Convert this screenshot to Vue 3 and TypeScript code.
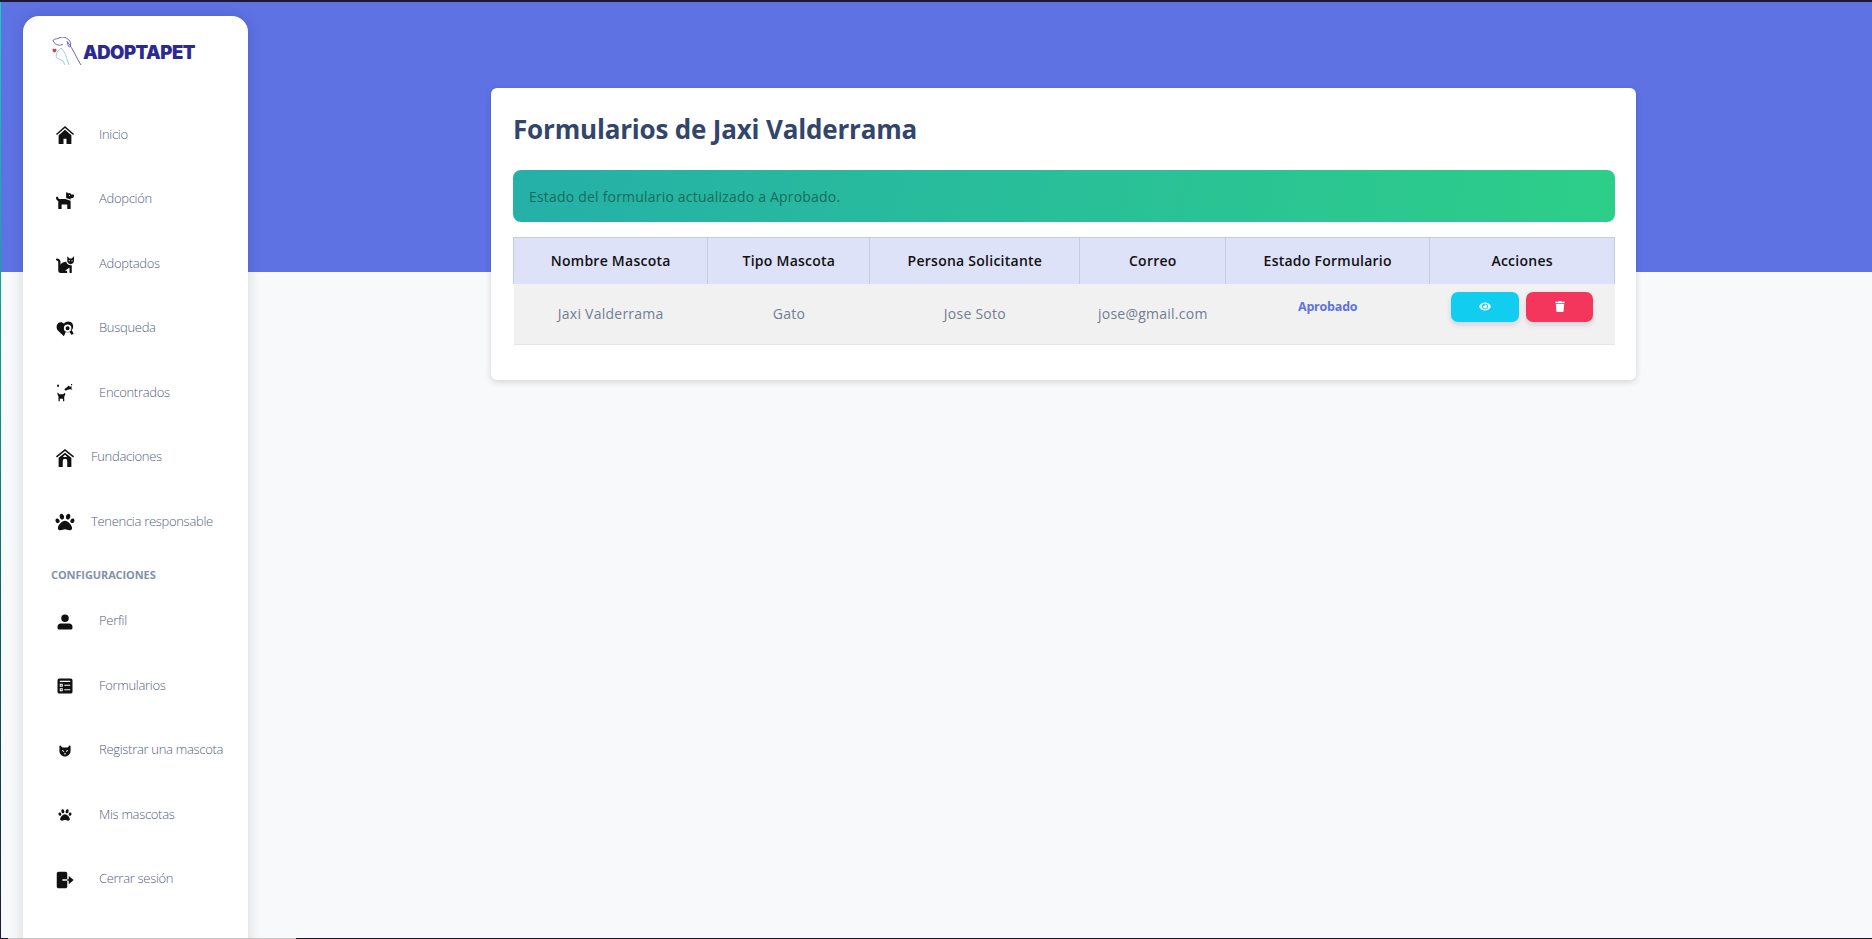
<script setup lang="ts">
interface NavItem {
  label: string
  icon: string
  wide?: boolean
}

interface Glyph {
  box: string
  d: string
}

const mainItems: NavItem[] = [
  { label: 'Inicio', icon: 'home' },
  { label: 'Adopción', icon: 'dog' },
  { label: 'Adoptados', icon: 'cat' },
  { label: 'Busqueda', icon: 'search' },
  { label: 'Encontrados', icon: 'found' },
  { label: 'Fundaciones', icon: 'kennel', wide: true },
  { label: 'Tenencia responsable', icon: 'paw', wide: true },
]

const configItems: NavItem[] = [
  { label: 'Perfil', icon: 'user' },
  { label: 'Formularios', icon: 'form' },
  { label: 'Registrar una mascota', icon: 'face' },
  { label: 'Mis mascotas', icon: 'smallpaw' },
  { label: 'Cerrar sesión', icon: 'logout' },
]

const pawPath = 'M256 224c-79.41 0-192 122.76-192 200.25 0 34.9 26.81 55.75 71.74 55.75 48.84 0 81.09-25.08 120.26-25.08 39.51 0 71.85 25.08 120.26 25.08 44.93 0 71.74-20.85 71.74-55.75C448 346.76 335.41 224 256 224zm-147.28-12.61c-10.4-34.65-42.44-57.09-71.56-50.13-29.12 6.96-44.29 40.69-33.89 75.34 10.4 34.65 42.44 57.09 71.56 50.13 29.12-6.96 44.29-40.69 33.89-75.34zm84.72-20.78c30.94-8.14 46.42-49.94 34.58-93.36s-46.52-72.01-77.46-63.87-46.42 49.94-34.58 93.36c11.84 43.42 46.52 72.01 77.46 63.87zm281.39-29.34c-29.12-6.96-61.15 15.48-71.56 50.13-10.4 34.65 4.77 68.38 33.89 75.34 29.12 6.96 61.15-15.48 71.56-50.13 10.4-34.65-4.77-68.38-33.89-75.34zm-156.27 29.34c30.94 8.14 65.62-20.45 77.46-63.87 11.84-43.42-3.64-85.21-34.58-93.36s-65.62 20.45-77.46 63.87c-11.84 43.42 3.64 85.22 34.58 93.36z'

const glyphs: Record<string, Glyph> = {
  home: {
    box: '0 0 24 24',
    d: 'M12 0 0 10.500l1.200 1.400L12 2.600l10.800 9.300 1.200-1.400zM12 5 3.500 12.300V24H10v-7h4v7h6.500V12.300z',
  },
  dog: {
    box: '0 0 512 512',
    d: 'M496 96h-64l-7.160-14.310A32 32 0 0 0 396.220 64H342.600l-27.280-27.280C305.230 26.640 288 33.780 288 48.030v149.840l128 45.710V208h32c35.350 0 64-28.650 64-64v-32c0-8.840-7.160-16-16-16zm-112 48c-8.840 0-16-7.160-16-16s7.160-16 16-16 16 7.160 16 16-7.160 16-16 16zM96 224c-17.640 0-32-14.360-32-32 0-17.670-14.330-32-32-32S0 174.330 0 192c0 41.660 26.830 76.850 64 90.100V496c0 8.840 7.160 16 16 16h64c8.840 0 16-7.160 16-16V384h160v112c0 8.840 7.160 16 16 16h64c8.840 0 16-7.160 16-16V277.550L266.050 224H96z',
  },
  cat: {
    box: '0 0 512 512',
    d: 'M290.590 192c-20.180 0-106.820 1.980-162.590 85.950V192c0-52.940-43.060-96-96-96-17.670 0-32 14.330-32 32s14.330 32 32 32c17.640 0 32 14.360 32 32v256c0 35.300 28.700 64 64 64h176c8.840 0 16-7.160 16-16v-16c0-17.670-14.330-32-32-32h-32l128-96v144c0 8.840 7.160 16 16 16h32c8.840 0 16-7.160 16-16V289.860c-10.290 2.670-20.890 4.540-32 4.540-61.810 0-113.520-44.050-125.410-102.400zM448 96h-64l-64-64v134.400c0 53.020 42.980 96 96 96s96-42.980 96-96V32l-64 64zm-72 80c-8.840 0-16-7.160-16-16s7.160-16 16-16 16 7.160 16 16-7.160 16-16 16zm80 0c-8.840 0-16-7.160-16-16s7.160-16 16-16 16 7.160 16 16-7.160 16-16 16z',
  },
  search: {
    box: '0 0 24 24',
    d: 'M10.500 21.500 2.500 14C-.5 10.500.5 3.500 6 3c2 0 3.500.7 4.500 2C12 3 14 2 16.500 2c4.500 0 7 4 6.300 7.500-.3 1.800-1 3-1.800 4l2.500 4.500-2.500 2-3-4c-1.500.6-3.500.6-5 0zM15.500 6a5 5 0 1 0 0 10 5 5 0 0 0 0-10zm0 2.300a2.700 2.700 0 1 1 0 5.400 2.700 2.700 0 0 1 0-5.400z',
  },
  found: {
    box: '0 0 24 24',
    d: 'M1.500 1h2.500v2.500H1.500zM11 7l3.500-2.800 2.500-2.200 1.500 1.500L21 3l-.5 2.500 1.500 2-3-.5-3.500.5-2.500 1.500zM20 0h1.500v1.500H20zM2 11l2.500 2.500h5l2.300-2 .7 2.500-1.500 2.500V23H9.300v-3.500H5V23H3.300v-6.500L2 14z',
  },
  kennel: {
    box: '0 0 24 24',
    d: 'M12 0 0 9.500l1.200 1.700L12 2.800l10.800 8.400L24 9.500zM12 5 3.500 11.500V24H9v-8a3 3 0 0 1 6 0v8h5.500V11.500zm0 2.800 3 2.700H9z',
  },
  paw: { box: '14 14 485 485', d: pawPath },
  user: {
    box: '0 0 24 24',
    d: 'M12 2a5 5 0 1 1 0 10 5 5 0 0 1 0-10zM6.500 14h11c2.800 0 4.500 2 4.500 4.500v1c0 1.500-1 2.500-2.500 2.500h-15C3 22 2 21 2 19.500v-1C2 16 3.700 14 6.500 14z',
  },
  form: {
    box: '0 0 24 24',
    d: 'M4.500 2h15A2.500 2.500 0 0 1 22 4.500v15a2.500 2.500 0 0 1-2.500 2.500h-15A2.500 2.500 0 0 1 2 19.500v-15A2.500 2.500 0 0 1 4.500 2zM5 5v1.500h14V5zm0 4v4h4V9zm1.300 1.300h1.400v1.400H6.300zM5 15v4h4v-4zm1.300 1.300h1.400v1.400H6.300zM11 10.200v1.600h8v-1.600zm0 6v1.600h8v-1.600z',
  },
  face: {
    box: '-5 -5 34 34',
    d: 'M3 1l4 4.500h10L21 1l1.500 1.500v10c0 5-5 10-10.500 10S1.500 17.500 1.500 12.500v-10zM7.500 10 6 11l3.500 3 1-1.500zm9 0-3 2.500 1 1.500 3.500-3zM12 15l-1.700 2.500L12 19l1.700-1.500z',
  },
  smallpaw: { box: '-98 -98 709 709', d: pawPath },
  logout: {
    box: '0 0 24 24',
    d: 'M3.500 1h9C14 1 15 2 15 3.500V11H8.500v2H15v7.500c0 1.500-1 2.500-2.500 2.500h-9C2 23 1 22 1 20.500v-17C1 2 2 1 3.500 1zM17 6.500l6.500 5.500-6.500 5.500V13h-2v-2h2z',
  },
}
</script>

<template>
  <div class="page">
    <div class="banner" />
    <div class="edge edge-top" />
    <div class="edge edge-left" />
    <div class="edge edge-bottom" />

    <aside class="sidebar">
      <div class="brand">
        <svg class="brand-mark" viewBox="0 0 30 30" fill="none">
          <path d="M1 4C1 2 4 2 6 1.500 8 0 13-.5 15 1.500c3 1.500 4 4.500 3.500 7.500-.5 1.500-2 1-2.500-1l-1-4M1 4c1 2 3 3.500 5 4 2 .5 4 0 5-1M15.500 5c2.500 3 5.500 8 7.500 12l3 6 3 5" stroke="#5b55b8" stroke-width=".9" />
          <path d="M9 11 5 15l-.5 3c-1 2 .5 4 3.500 4.500l3 1.500 2 4M9 11c2 2 4 5 5 8l3 9" stroke="#8cc6ea" stroke-width=".9" />
          <path d="M.5 13c0-1.500 2-1.500 2-.5 0-1 2-1 2 .5 0 1-1 1.800-2 2.700-1-.9-2-1.700-2-2.700z" fill="#e0353f" />
        </svg>
        <span class="brand-name">ADOPTAPET</span>
      </div>

      <nav class="nav">
        <a v-for="item in mainItems" :key="item.label" class="nav-item" :class="{ wide: item.wide }">
          <svg class="nav-icon" :viewBox="glyphs[item.icon].box" fill="#111">
            <path :d="glyphs[item.icon].d" fill-rule="evenodd" />
          </svg>
          <span class="nav-label">{{ item.label }}</span>
        </a>
        <h6 class="nav-title">CONFIGURACIONES</h6>
        <a v-for="item in configItems" :key="item.label" class="nav-item">
          <svg class="nav-icon" :viewBox="glyphs[item.icon].box" fill="#111">
            <path :d="glyphs[item.icon].d" fill-rule="evenodd" />
          </svg>
          <span class="nav-label">{{ item.label }}</span>
        </a>
      </nav>
    </aside>

    <main class="content">
      <section class="card">
        <h2 class="card-title">Formularios de Jaxi Valderrama</h2>
        <div class="alert">Estado del formulario actualizado a Aprobado.</div>

        <table class="forms">
          <thead>
            <tr>
              <th class="col-name">Nombre Mascota</th>
              <th class="col-type">Tipo Mascota</th>
              <th class="col-person">Persona Solicitante</th>
              <th class="col-mail">Correo</th>
              <th class="col-state">Estado Formulario</th>
              <th>Acciones</th>
            </tr>
          </thead>
          <tbody>
            <tr>
              <td>Jaxi Valderrama</td>
              <td>Gato</td>
              <td>Jose Soto</td>
              <td>jose@gmail.com</td>
              <td class="state"><span>Aprobado</span></td>
              <td class="actions">
                <div class="btn-row">
                  <button class="btn btn-view" type="button">
                    <svg class="eye" viewBox="0 0 576 512" fill="#fff">
                      <path d="M572.520 241.400C518.290 135.590 410.930 64 288 64S57.680 135.640 3.480 241.410a32.350 32.350 0 0 0 0 29.190C57.710 376.410 165.070 448 288 448s230.320-71.640 284.520-177.410a32.350 32.350 0 0 0 0-29.190zM288 400a144 144 0 1 1 144-144 143.930 143.930 0 0 1-144 144zm0-240a95.310 95.310 0 0 0-25.310 3.790 47.850 47.850 0 0 1-66.900 66.900A95.780 95.780 0 1 0 288 160z" />
                    </svg>
                  </button>
                  <button class="btn btn-delete" type="button">
                    <svg class="trash" viewBox="0 0 448 512" fill="#fff">
                      <path d="M432 32H312l-9.400-18.700A24 24 0 0 0 281.100 0H166.800a23.720 23.720 0 0 0-21.400 13.300L136 32H16A16 16 0 0 0 0 48v32a16 16 0 0 0 16 16h416a16 16 0 0 0 16-16V48a16 16 0 0 0-16-16zM53.200 467a48 48 0 0 0 47.900 45h245.800a48 48 0 0 0 47.900-45L416 128H32z" />
                    </svg>
                  </button>
                </div>
              </td>
            </tr>
          </tbody>
        </table>
      </section>
    </main>
  </div>
</template>

<style>
html,
body {
  margin: 0;
  background: #f8f9fb;
}
</style>

<style scoped>
.page {
  position: relative;
  display: flex;
  height: 939px;
  overflow: hidden;
  background: #f8f9fb;
  font-family: "Open Sans", sans-serif;
}

.banner {
  position: absolute;
  top: 0;
  left: 0;
  right: 0;
  height: 272px;
  background: #5e72e4;
}

.edge {
  position: absolute;
  z-index: 2;
}

.edge-top {
  top: 0;
  left: 0;
  right: 0;
  height: 2px;
  background: #1d1733;
}

.edge-left {
  top: 2px;
  bottom: 0;
  left: 0;
  width: 1px;
  background: linear-gradient(180deg, #11d4b8 0%, #0b8f84 45%, #0a5a58 70%, #1d1733 100%);
}

.edge-bottom {
  left: 0;
  right: 0;
  bottom: 0;
  height: 1px;
  background: linear-gradient(90deg, #1d1733 8px, #c4c4c4 8px, #c4c4c4 296px, #1d1733 296px);
}

.sidebar {
  position: relative;
  flex: 0 0 225px;
  box-sizing: border-box;
  height: 960px;
  margin: 16px 0 0 23px;
  background: #fff;
  border-radius: 16px 16px 0 0;
  box-shadow: 0 0 14px rgba(0, 0, 0, 0.14);
}

.brand {
  display: flex;
  align-items: center;
  gap: 1px;
  height: 36px;
  margin: 18px 0 0 29px;
}

.brand-mark {
  flex: none;
  width: 30px;
  height: 30px;
}

.brand-name {
  font-family: Inter, sans-serif;
  font-size: 18.500px;
  font-weight: 900;
  letter-spacing: -0.5px;
  color: #2b2a92;
}

.nav {
  display: flex;
  flex-direction: column;
  margin-top: 33px;
}

.nav-item {
  display: flex;
  align-items: center;
  flex: none;
  height: 64.500px;
  padding-left: 33px;
  font-size: 13px;
  font-weight: 300;
  letter-spacing: -0.3px;
  color: #56627f;
}

.nav-label {
  margin-bottom: 3px;
}

.nav-icon {
  flex: none;
  width: 18px;
  height: 18px;
  margin-right: 25px;
  overflow: visible;
}

.nav-item.wide .nav-icon {
  margin-right: 17px;
}

.nav-title {
  margin: 12px 0 7px 28px;
  font-size: 11px;
  line-height: 16px;
  font-weight: 700;
  letter-spacing: -0.1px;
  color: #8392ab;
}

.content {
  position: relative;
  flex: 1;
  padding: 88px 236px 0 243px;
}

.card {
  box-sizing: border-box;
  height: 292px;
  padding: 23px 21px 23px 22px;
  background: #fff;
  border-radius: 6px;
  box-shadow: 0 2px 6px rgba(0, 0, 0, 0.15);
}

.card-title {
  margin: 0 0 23px;
  font-size: 26px;
  line-height: 36px;
  font-weight: 700;
  letter-spacing: -0.18px;
  color: #32456b;
}

.alert {
  display: flex;
  align-items: center;
  box-sizing: border-box;
  height: 52px;
  padding: 0 16px;
  border-radius: 8px;
  background: linear-gradient(100deg, #25b0a8 0%, #2dce89 100%);
  font-size: 14px;
  letter-spacing: 0.2px;
  color: #1a6b5e;
}

.forms {
  width: 100%;
  margin-top: 15px;
  border-collapse: collapse;
  table-layout: fixed;
}

th {
  box-sizing: border-box;
  height: 46px;
  padding: 0;
  border: 1px solid #c6cae6;
  border-bottom: 0;
  background: #dee2f8;
  font-size: 14px;
  font-weight: 600;
  letter-spacing: 0.25px;
  color: #111;
  text-align: center;
}

.col-name {
  width: 194.400px;
}

.col-type {
  width: 162px;
}

.col-person {
  width: 210px;
}

.col-mail {
  width: 145.800px;
}

.col-state {
  width: 204px;
}

td {
  box-sizing: border-box;
  height: 61px;
  padding: 0;
  background: #f1f1f1;
  border-bottom: 1px solid #e6e6e6;
  font-size: 14px;
  letter-spacing: 0.25px;
  color: #737d93;
  text-align: center;
}

.state {
  vertical-align: top;
  padding-top: 12px;
}

.state span {
  font-size: 12.500px;
  font-weight: 700;
  letter-spacing: -0.2px;
  color: #5e72e4;
}

.actions {
  vertical-align: top;
  padding-top: 8px;
}

.btn-row {
  display: flex;
  justify-content: center;
  gap: 7px;
}

.btn {
  display: flex;
  align-items: center;
  justify-content: center;
  width: 68px;
  height: 30px;
  padding: 0;
  border: 0;
  border-radius: 7px;
  box-shadow: 0 3px 5px rgba(50, 50, 93, 0.15);
}

.eye {
  width: 12px;
  height: 11px;
}

.trash {
  width: 10px;
  height: 11px;
}

.btn-view {
  background: #11cdef;
}

.btn-delete {
  width: 67px;
  background: #f5365c;
}
</style>
